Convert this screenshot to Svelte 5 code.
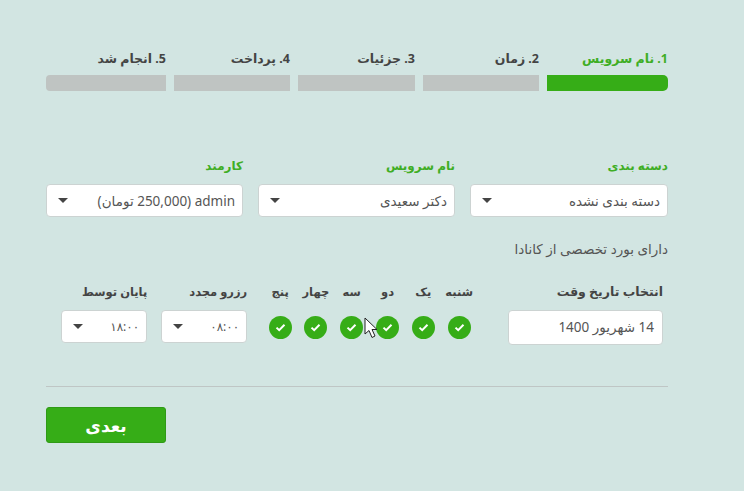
<script lang="ts">
  const steps = [
    { label: '1. نام سرویس', done: true },
    { label: '2. زمان', done: false },
    { label: '3. جزئیات', done: false },
    { label: '4. پرداخت', done: false },
    { label: '5. انجام شد', done: false }
  ];

  const fields = [
    { label: 'دسته بندی', value: 'دسته بندی نشده' },
    { label: 'نام سرویس', value: 'دکتر سعیدی' },
    { label: 'کارمند', value: 'admin (250,000 تومان)' }
  ];

  const days = ['شنبه', 'یک', 'دو', 'سه', 'چهار', 'پنج'];

  const times = [
    { label: 'رزرو مجدد', value: '۰۸:۰۰' },
    { label: 'پایان توسط', value: '۱۸:۰۰' }
  ];
</script>

<div class="page" dir="rtl">
  <div class="steps">
    {#each steps as step}
      <div class="step" class:done={step.done}>
        <div class="step-label">{step.label}</div>
        <div class="step-bar"></div>
      </div>
    {/each}
  </div>

  <div class="fields">
    {#each fields as field}
      <div class="field">
        <div class="field-label">{field.label}</div>
        <div class="select">
          <span>{field.value}</span>
          <i class="caret"></i>
        </div>
      </div>
    {/each}
  </div>

  <p class="info">دارای بورد تخصصی از کانادا</p>

  <div class="schedule">
    <div class="date-col">
      <div class="row-label">انتخاب تاریخ وقت</div>
      <div class="date-input">14 شهریور 1400</div>
    </div>

    <div class="days">
      {#each days as day}
        <div class="day">
          <div class="row-label">{day}</div>
          <div class="check">
            <svg width="11" height="9" viewBox="0 0 11 9">
              <path d="M1.5 4.6 4.2 7.2 9.5 1.8" fill="none" stroke="#fff" stroke-width="2" />
            </svg>
          </div>
        </div>
      {/each}
    </div>

    {#each times as time}
      <div class="time-col">
        <div class="row-label">{time.label}</div>
        <div class="select small">
          <span>{time.value}</span>
          <i class="caret"></i>
        </div>
      </div>
    {/each}
  </div>

  <hr />

  <button class="next">بعدی</button>

  <svg class="cursor" width="15" height="22" viewBox="0 0 15 22">
    <path d="M1 1 1 17 5 13.5 8 20.5 11 19 8 12.5 13 12.5Z" fill="#fff" stroke="#222" stroke-width="1" />
  </svg>
</div>

<style>
  :global(body) {
    background: #d2e5e2;
  }

  .page {
    position: relative;
    box-sizing: border-box;
    width: 744px;
    height: 491px;
    padding: 50px 76px 0 46px;
    font-family: "Noto Sans", "DejaVu Sans", sans-serif;
    color: #444;
    background: #d2e5e2;
    overflow: hidden;
  }

  .steps {
    display: grid;
    grid-template-columns: 121px 116px 117px 116px 120px;
    gap: 8px;
  }

  .step-label {
    height: 25px;
    line-height: 17px;
    font-size: 12.5px;
    font-weight: 700;
    color: #444;
  }

  .step-bar {
    height: 16px;
    background: #bfc4c2;
  }

  .step:last-child .step-bar {
    border-radius: 4px 0 0 4px;
  }

  .step.done .step-label {
    color: #3fae25;
  }

  .step.done .step-bar {
    background: #36ad17;
    border-radius: 0 5px 5px 0;
  }

  .fields {
    display: grid;
    grid-template-columns: 198px 197px 197px;
    gap: 15px;
    margin-top: 68px;
  }

  .field-label {
    height: 25px;
    line-height: 14px;
    font-size: 12px;
    font-weight: 700;
    color: #3fae25;
  }

  .select {
    box-sizing: border-box;
    display: flex;
    align-items: center;
    justify-content: space-between;
    height: 33px;
    padding: 0 7px 0 11px;
    background: #fff;
    border: 1px solid #ccd3d2;
    border-radius: 4px;
    font-size: 13.5px;
    color: #555;
  }

  .select.small {
    width: 86px;
    font-size: 12px;
  }

  .caret {
    width: 0;
    height: 0;
    border-left: 5px solid transparent;
    border-right: 5px solid transparent;
    border-top: 5px solid #444;
  }

  .info {
    margin: 24px 0 0;
    line-height: 17px;
    font-size: 13.5px;
    color: #555;
  }

  .schedule {
    display: flex;
    align-items: flex-start;
    margin-top: 25px;
    padding-right: 5px;
  }

  .row-label {
    height: 27px;
    line-height: 18px;
    font-size: 11.5px;
    font-weight: 700;
    color: #444;
    white-space: nowrap;
  }

  .date-col {
    width: 155px;
    margin-left: 31px;
  }

  .date-col .row-label {
    font-size: 12.5px;
  }

  .date-input {
    box-sizing: border-box;
    height: 35px;
    line-height: 33px;
    padding: 0 8px;
    background: #fff;
    border: 1px solid #ccd3d2;
    border-radius: 4px;
    font-size: 13.5px;
    color: #555;
  }

  .days {
    display: grid;
    grid-template-columns: repeat(6, 35.8px);
    margin-left: 15px;
  }

  .day {
    display: flex;
    flex-direction: column;
    align-items: center;
  }

  .check {
    display: flex;
    align-items: center;
    justify-content: center;
    width: 23px;
    height: 23px;
    margin-top: 6px;
    border-radius: 50%;
    background: #36ad17;
  }

  .time-col {
    width: 86px;
    margin-left: 14px;
  }

  .time-col:last-child {
    margin-left: 0;
  }

  hr {
    width: 622px;
    margin: 41px 0 20px;
    border: 0;
    border-top: 1px solid #bfc6c5;
  }

  .next {
    display: block;
    width: 120px;
    height: 36px;
    margin-right: 502px;
    padding: 0;
    background: #36ad17;
    border: 1px solid #2f9a16;
    border-radius: 3px;
    font-family: inherit;
    font-size: 17px;
    font-weight: 700;
    color: #fff;
  }

  .cursor {
    position: absolute;
    left: 364px;
    top: 317px;
  }
</style>
